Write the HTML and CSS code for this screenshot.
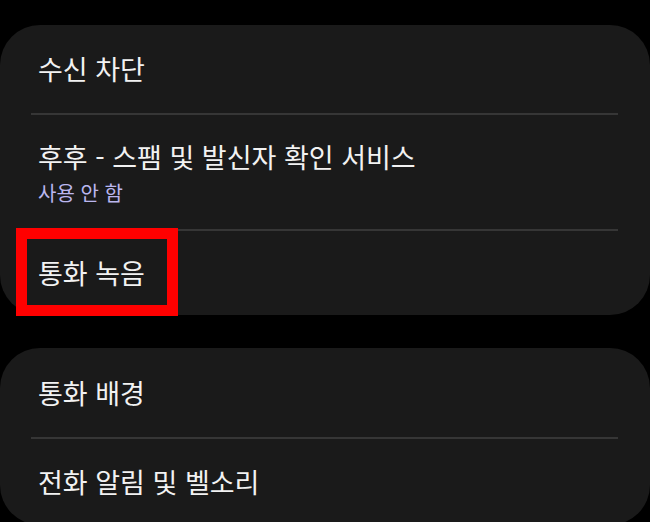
FILE: index.html
```html
<!DOCTYPE html>
<html lang="ko">
<head>
    <meta charset="UTF-8" />
    <meta name="viewport" content="width=device-width, initial-scale=1" />
    <title>통화 설정</title>
    <link rel="stylesheet" href="styles.css">
</head>
<body>
    <main class="settings">
        <section class="card">
            <div class="item item-short">
                <span class="title">수신 차단</span>
            </div>
            <div class="item item-tall">
                <span class="title">후후 - 스팸 및 발신자 확인 서비스</span>
                <span class="subtitle">사용 안 함</span>
            </div>
            <div class="item item-last">
                <span class="title">통화 녹음</span>
            </div>
            <div class="highlight"></div>
        </section>
        <section class="card">
            <div class="item item-first">
                <span class="title">통화 배경</span>
            </div>
            <div class="item item-short">
                <span class="title">전화 알림 및 벨소리</span>
            </div>
        </section>
    </main>
</body>
</html>
```

FILE: styles.css
```css
/* Dasar */
* {
    box-sizing: border-box;
}
body {
    margin: 0;
    background: #000;
    color: #f2f2f2;
    font-family: 'Noto Sans CJK KR', 'Noto Sans', sans-serif;
}
.settings {
    padding-top: 25px;
    display: flex;
    flex-direction: column;
    gap: 33px;
}
.card {
    position: relative;
    background: #1a1a1a;
    border-radius: 40px;
    padding: 0 32px 0 31px;
}
.item {
    display: flex;
    flex-direction: column;
    justify-content: center;
    padding-left: 7px;
    border-top: 2px solid #363636;
}
.item:first-child {
    border-top: none;
}
.item-short {
    height: 88px;
}
.item-first {
    height: 89px;
}
.item-tall {
    height: 116px;
}
.item-last {
    height: 86px;
}
.title {
    font-size: 27px;
    line-height: 1.45;
}
.subtitle {
    font-size: 20px;
    line-height: 1.45;
    color: #bab6ee;
    margin-top: 2px;
}
/* Kotak sorotan merah */
.highlight {
    position: absolute;
    left: 16px;
    top: 203px;
    width: 162px;
    height: 88px;
    border: 11px solid #ff0000;
}
```
